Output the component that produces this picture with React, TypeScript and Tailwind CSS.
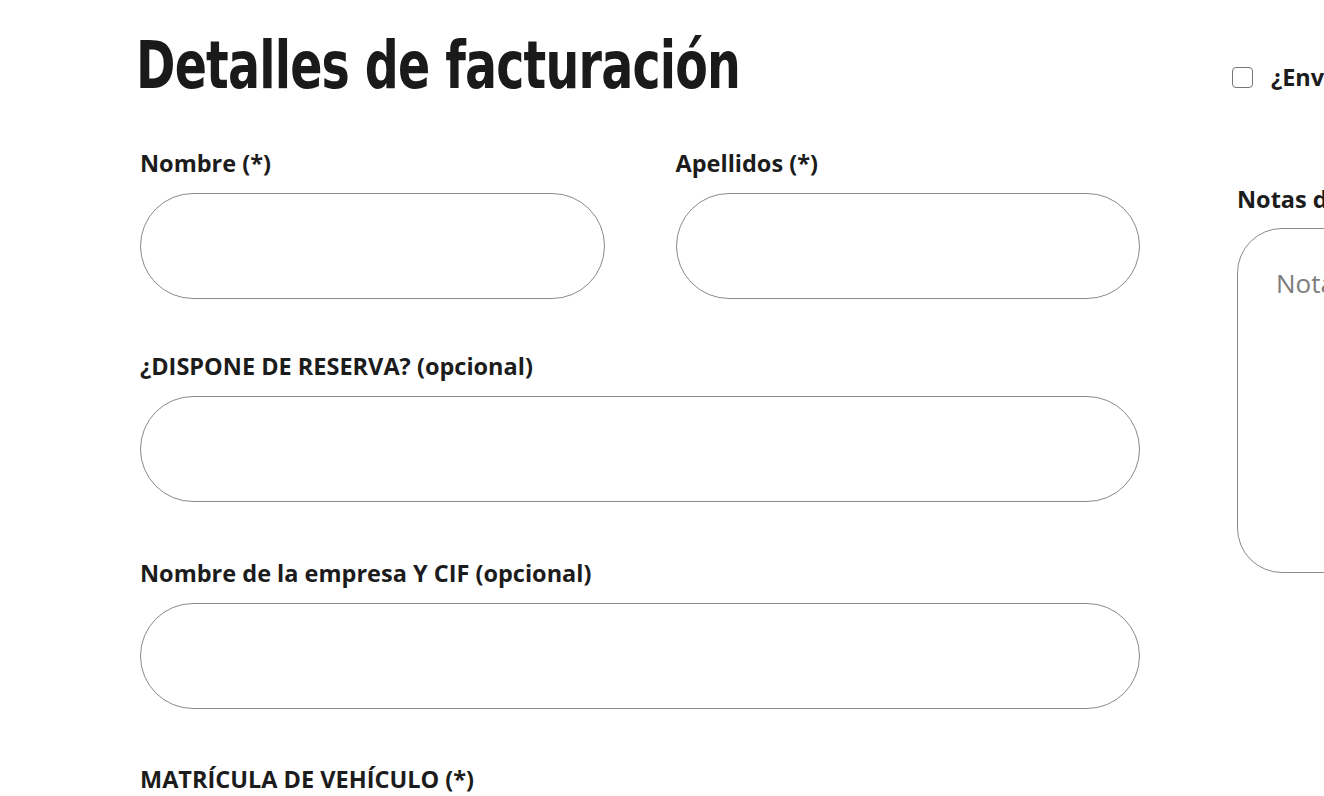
const labelFont = "font-['Open_Sans',sans-serif]";

const Field = ({ label, className = '' }: { label: string; className?: string }) => (
  <div className={`flex flex-col ${className}`}>
    <label className={`${labelFont} text-[23.5px] font-bold leading-[30px] text-[#1c1c1c] whitespace-nowrap`}>{label}</label>
    <input
      type="text"
      className="mt-[15px] h-[106px] w-full rounded-full border border-[#8a8a8a] bg-white px-8 outline-none"
    />
  </div>
);

export default function App() {
  return (
    <div className="h-[796px] w-[1324px] overflow-hidden bg-white">
      <div className="flex w-[2600px] gap-[97px] pl-[140px] pt-[30px]">
        {/* Billing */}
        <div className="w-[1000px] shrink-0">
          <h1 className="-ml-[4px] origin-left scale-x-[0.8] font-['DejaVu_Sans_Condensed',sans-serif] text-[66px] font-bold leading-[72px] tracking-[-1px] text-[#1a1a1a] whitespace-nowrap">
            Detalles de facturación
          </h1>
          <div className="mt-[46px] flex flex-col">
            <div className="grid grid-cols-2 gap-[71px]">
              <Field label="Nombre (*)" />
              <Field label="Apellidos (*)" />
            </div>
            <Field label="¿DISPONE DE RESERVA? (opcional)" className="mt-[52px]" />
            <Field label="Nombre de la empresa Y CIF (opcional)" className="mt-[56px]" />
            <Field label="MATRÍCULA DE VEHÍCULO (*)" className="mt-[55px]" />
          </div>
        </div>

        {/* Shipping / notes */}
        <div className="w-[1100px] shrink-0 pt-[32px]">
          <label className={`-ml-[5px] flex items-center gap-[18px] ${labelFont} text-[23.5px] font-bold leading-[30px] text-[#1c1c1c] whitespace-nowrap`}>
            <span className="h-[21px] w-[21px] shrink-0 rounded-[4px] border border-[#767676] bg-white" />
            ¿Enviar a una dirección diferente?
          </label>
          <div className={`mt-[92px] ${labelFont} text-[23.5px] font-bold leading-[30px] text-[#1c1c1c] whitespace-nowrap`}>
            Notas del pedido (opcional)
          </div>
          <textarea
            placeholder="Notas sobre tu pedido, por ejemplo, notas especiales para la entrega."
            className={`mt-[14px] h-[345px] w-full resize-none rounded-[45px] border border-[#8a8a8a] px-[38px] py-[36px] ${labelFont} text-[26px] leading-[36px] text-[#333] placeholder:text-[#7c7c7c] outline-none`}
          />
        </div>
      </div>
    </div>
  );
}
